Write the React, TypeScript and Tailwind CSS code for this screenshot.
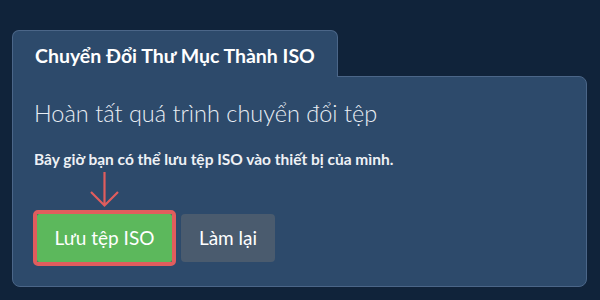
import React from "react";

export default function App() {
  return (
    <div
      className="w-[600px] h-[300px] bg-[#10233a] pt-[30px] pl-[12px] pr-[13px]"
      style={{ fontFamily: "Lato, 'Noto Sans', sans-serif" }}
    >
      <div className="flex flex-col">
        <div className="relative z-10 -mb-px self-start h-[47px] flex items-center px-[22px] pt-[4px] bg-[#2d4a6b] border-t border-x border-[#4b6688] rounded-t-[7px]">
          <span className="text-white font-bold text-[19.5px] leading-none">
            Chuyển Đổi Thư Mục Thành ISO
          </span>
        </div>
        <div className="h-[211px] bg-[#2d4a6b] border border-[#4b6688] rounded-b-[8px] rounded-tr-[8px] px-[21px] pt-[20px]">
          <h1 className="text-[#e8edf3] font-light text-[23.5px] leading-[32px]">
            Hoàn tất quá trình chuyển đổi tệp
          </h1>
          <p className="mt-[20px] text-[#eef1f5] font-bold text-[15.5px] leading-[20px]">
            Bây giờ bạn có thể lưu tệp ISO vào thiết bị của mình.
          </p>
          <div className="flex flex-col mt-[3px] -ml-px">
            <svg width="143" height="38" viewBox="0 0 143 38" className="block">
              <path
                d="M71.5 0 V33.5 M58 20 L71.5 33.5 L85 20"
                fill="none"
                stroke="#e05d5d"
                strokeWidth="2.2"
              />
            </svg>
            <div className="flex items-center gap-[5px]">
              <div className="border-4 border-[#e05d5d] rounded-[5px]">
                <button className="h-[48px] w-[135px] bg-[#5cb85c] text-white text-[19px] rounded-[2px]">
                  Lưu tệp ISO
                </button>
              </div>
              <button className="h-[48px] w-[94px] bg-[#4a5b6e] text-white text-[19px] rounded-[4px]">
                Làm lại
              </button>
            </div>
          </div>
        </div>
      </div>
    </div>
  );
}
